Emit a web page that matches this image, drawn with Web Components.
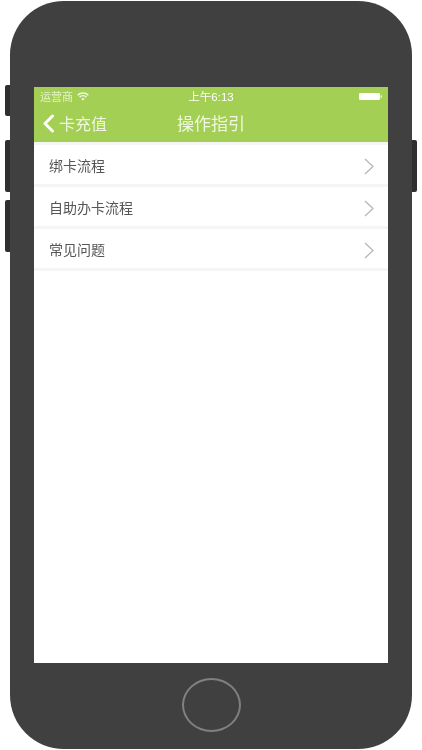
<!DOCTYPE html>
<html lang="zh">
<head>
<meta charset="utf-8">
<title>操作指引</title>
<style>
    html, body { margin: 0; padding: 0; background: #fff; }
    body { width: 422px; height: 750px; overflow: hidden; font-family: "Liberation Sans", "Noto Sans CJK SC", sans-serif; }
</style>
</head>
<body>
<phone-frame>
    <status-bar carrier="运营商" time="上午6:13"></status-bar>
    <nav-bar back="卡充值" title="操作指引"></nav-bar>
    <guide-row>绑卡流程</guide-row>
    <guide-row>自助办卡流程</guide-row>
    <guide-row>常见问题</guide-row>
</phone-frame>

<script>
class PhoneFrame extends HTMLElement {
    constructor() {
        super();
        this.attachShadow({ mode: 'open' });
        this.shadowRoot.innerHTML = `
            <style>
                :host {
                    display: block;
                    position: relative;
                    width: 402px;
                    height: 748px;
                    margin: 1px 0 0 10px;
                }
                .body {
                    box-sizing: border-box;
                    height: 100%;
                    padding: 86px 24px 0;
                    background: #404040;
                    border-radius: 54px;
                    display: flex;
                    flex-direction: column;
                    align-items: center;
                }
                .screen {
                    width: 354px;
                    height: 576px;
                    background: #fff;
                    display: flex;
                    flex-direction: column;
                    flex: none;
                }
                .home {
                    flex: none;
                    box-sizing: border-box;
                    width: 59px;
                    height: 54px;
                    margin-top: 15px;
                    border: 2px solid #808080;
                    border-radius: 50%;
                }
                .side {
                    position: absolute;
                    width: 5px;
                    background: #2f2f2f;
                }
                .left { left: -5px; border-radius: 2px 0 0 2px; }
                .right { right: -5px; border-radius: 0 2px 2px 0; }
            </style>
            <div class="side left" style="top: 84px; height: 31px"></div>
            <div class="side left" style="top: 139px; height: 52px"></div>
            <div class="side left" style="top: 199px; height: 52px"></div>
            <div class="side right" style="top: 139px; height: 52px"></div>
            <div class="body">
                <div class="screen"><slot></slot></div>
                <div class="home"></div>
            </div>
        `;
    }
}

class StatusBar extends HTMLElement {
    constructor() {
        super();
        this.attachShadow({ mode: 'open' });
        this.shadowRoot.innerHTML = `
            <style>
                :host {
                    display: grid;
                    grid-template-columns: 1fr auto 1fr;
                    align-items: center;
                    height: 18px;
                    padding: 0 6px;
                    background: #a3d054;
                    color: #f2f8e6;
                    font: 11px "Liberation Sans", "Noto Sans CJK SC", sans-serif;
                }
                .left { display: flex; align-items: center; gap: 4px; }
                .carrier { color: #e4f2c8; filter: blur(.3px); }
                .time { font-size: 11.5px; color: #fff; filter: blur(.3px); }
                .battery { justify-self: end; display: block; }
                svg { display: block; }
            </style>
            <div class="left">
                <span class="carrier"></span>
                <svg width="12" height="9" viewBox="0 0 11 8" fill="none" stroke="#f2f8e6" stroke-width="1.4">
                    <path d="M.6 2.8a7 7 0 0 1 9.8 0"/>
                    <path d="M2.4 4.6a4.4 4.4 0 0 1 6.2 0"/>
                    <path d="M5.5 7.6 4 6.2a2.1 2.1 0 0 1 3 0z" fill="#f2f8e6" stroke="none"/>
                </svg>
            </div>
            <span class="time"></span>
            <svg class="battery" width="23" height="7" viewBox="0 0 23 7">
                <rect x="0" y="0" width="21" height="7" rx="1.2" fill="#fff"/>
                <rect x="21.5" y="2.2" width="1.5" height="2.6" rx=".5" fill="#e8f3d0"/>
            </svg>
        `;
    }

    connectedCallback() {
        this.shadowRoot.querySelector('.carrier').textContent = this.getAttribute('carrier');
        this.shadowRoot.querySelector('.time').textContent = this.getAttribute('time');
    }
}

class NavBar extends HTMLElement {
    constructor() {
        super();
        this.attachShadow({ mode: 'open' });
        this.shadowRoot.innerHTML = `
            <style>
                :host {
                    display: grid;
                    grid-template-columns: 1fr auto 1fr;
                    align-items: center;
                    height: 37px;
                    padding: 0 8px 2px;
                    box-sizing: border-box;
                    background: #a3d054;
                    color: #f0f7e0;
                    font: 16px "Liberation Sans", "Noto Sans CJK SC", sans-serif;
                }
                .back { display: flex; align-items: center; gap: 4px; }
                .back-text { filter: blur(.3px); }
                .title { font-size: 17px; filter: blur(.3px); }
                svg { display: block; margin-top: 2px; }
            </style>
            <div class="back">
                <svg width="13" height="19" viewBox="0 0 13 19" fill="none" stroke="#fff" stroke-width="3" stroke-linecap="round" stroke-linejoin="round">
                    <path d="M10.5 2 3 9.5l7.5 7.5"/>
                </svg>
                <span class="back-text"></span>
            </div>
            <span class="title"></span>
            <span></span>
        `;
    }

    connectedCallback() {
        this.shadowRoot.querySelector('.back-text').textContent = this.getAttribute('back');
        this.shadowRoot.querySelector('.title').textContent = this.getAttribute('title');
    }
}

class GuideRow extends HTMLElement {
    constructor() {
        super();
        this.attachShadow({ mode: 'open' });
        this.shadowRoot.innerHTML = `
            <style>
                :host {
                    display: flex;
                    align-items: center;
                    justify-content: space-between;
                    box-sizing: border-box;
                    height: 42px;
                    padding: 0 14px 0 15px;
                    border-top: 3px solid #f5f5f5;
                    color: #555;
                    font: 14px "Liberation Sans", "Noto Sans CJK SC", sans-serif;
                }
                :host(:last-child) { height: 45px; border-bottom: 3px solid #f5f5f5; }
                span { filter: blur(.3px); }
                svg { display: block; margin-top: 3px; }
            </style>
            <span><slot></slot></span>
            <svg width="10" height="17" viewBox="0 0 10 17" fill="none" stroke="#b4b4b4" stroke-width="1.2">
                <path d="M1 1l8 7.5-8 7.5"/>
            </svg>
        `;
    }
}

customElements.define('phone-frame', PhoneFrame);
customElements.define('status-bar', StatusBar);
customElements.define('nav-bar', NavBar);
customElements.define('guide-row', GuideRow);
</script>
</body>
</html>
